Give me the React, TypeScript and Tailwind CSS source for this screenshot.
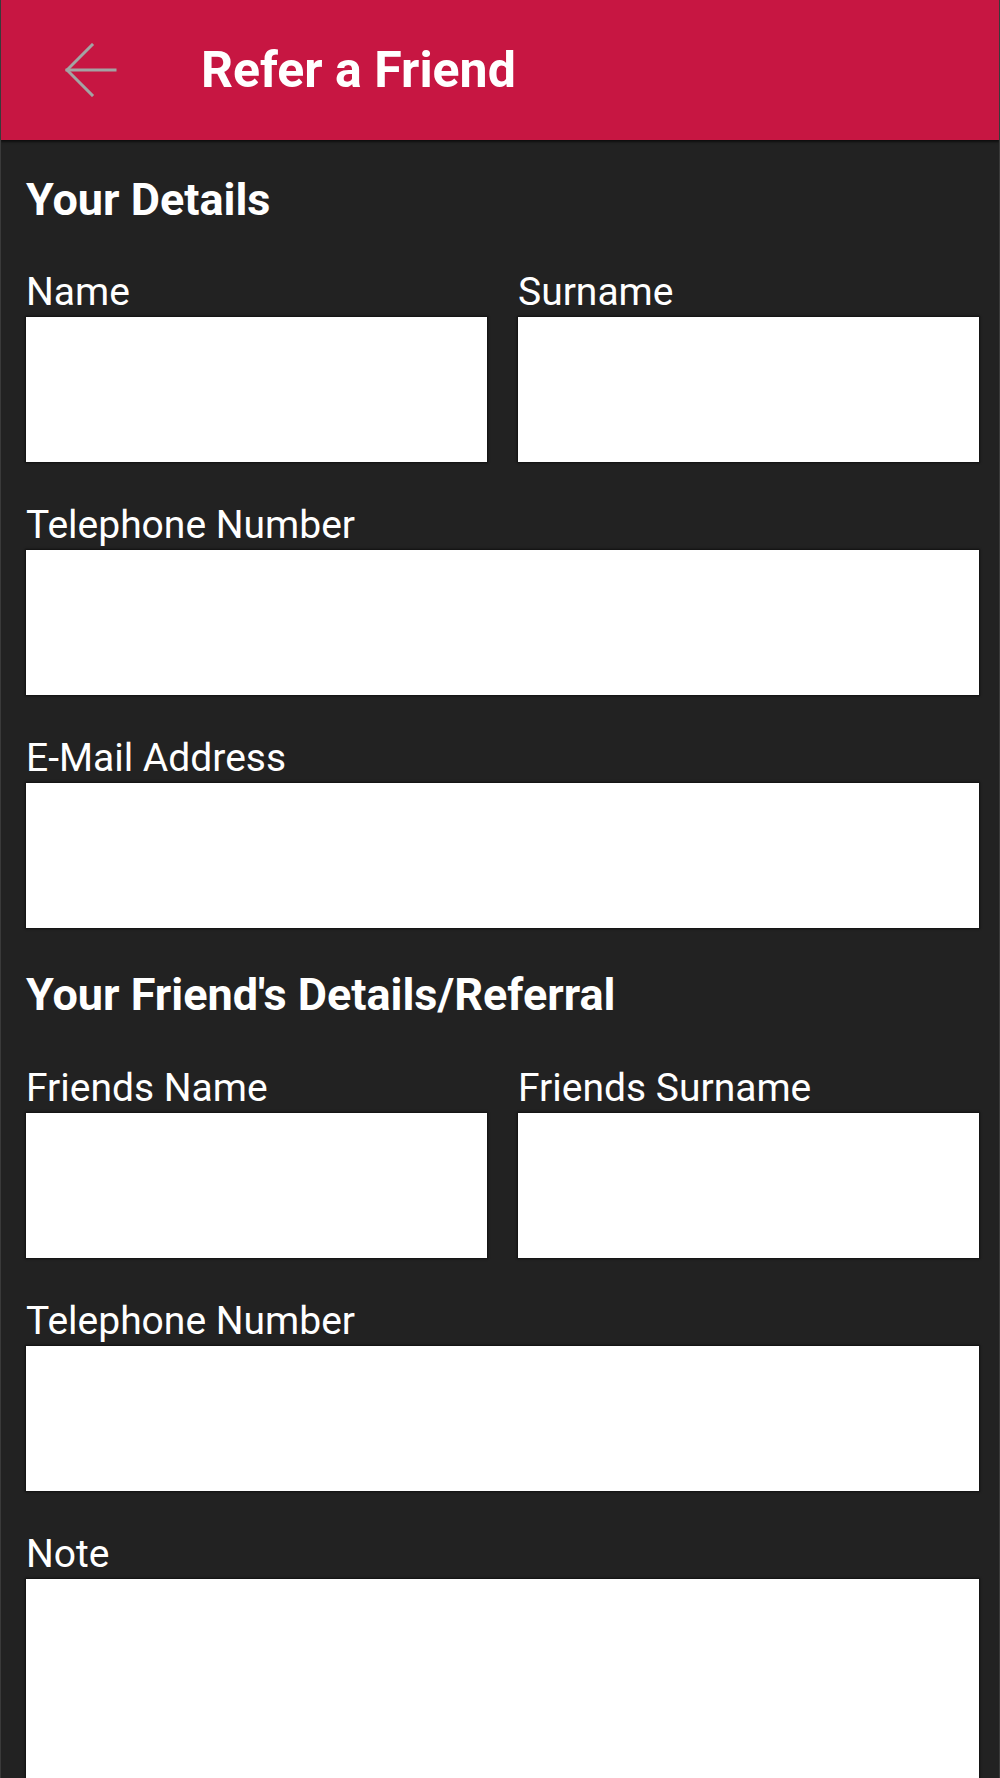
import React from "react";

function Field({ label }: { label: string }) {
  return (
    <div className="flex flex-col">
      <div className="h-[50px] leading-[50px] text-[39px] text-white whitespace-nowrap">{label}</div>
      <div className="h-[145px] bg-white shadow-[0_0_2px_1px_rgba(0,0,0,0.55)]" />
    </div>
  );
}

export default function App() {
  return (
    <div className="w-[1000px] h-[1778px] overflow-hidden bg-[#222222] border-x border-[#3a3a3a]" style={{ fontFamily: "Roboto, 'Noto Sans', sans-serif" }}>
      <header className="h-[140px] bg-[#c71642] flex items-center shadow-[0_2px_2px_rgba(0,0,0,0.6)] relative">
        <div className="w-[200px] flex pl-[64px]">
          <svg width="52" height="54" viewBox="0 0 52 54" fill="none" stroke="#a3a3a3" strokeWidth="3" strokeLinecap="square">
            <path d="M2 27 H50" />
            <path d="M27 2 L2 27 L27 52" />
          </svg>
        </div>
        <h1 className="text-white font-bold text-[50px] leading-none">Refer a Friend</h1>
      </header>
      <main className="pl-[25px] pr-[20px] pt-[30px]">
        <h2 className="h-[60px] leading-[60px] text-[45px] font-bold text-white">Your Details</h2>
        <div className="mt-[37px] grid grid-cols-2 gap-x-[31px]">
          <Field label="Name" />
          <Field label="Surname" />
        </div>
        <div className="mt-[38px]"><Field label="Telephone Number" /></div>
        <div className="mt-[38px]"><Field label="E-Mail Address" /></div>
        <h2 className="mt-[37px] h-[60px] leading-[60px] text-[45px] font-bold text-white">Your Friend's Details/Referral</h2>
        <div className="mt-[38px] grid grid-cols-2 gap-x-[31px]">
          <Field label="Friends Name" />
          <Field label="Friends Surname" />
        </div>
        <div className="mt-[38px]"><Field label="Telephone Number" /></div>
        <div className="mt-[38px] flex flex-col">
          <div className="h-[50px] leading-[50px] text-[39px] text-white">Note</div>
          <div className="h-[300px] bg-white shadow-[0_0_2px_1px_rgba(0,0,0,0.55)]" />
        </div>
      </main>
    </div>
  );
}
